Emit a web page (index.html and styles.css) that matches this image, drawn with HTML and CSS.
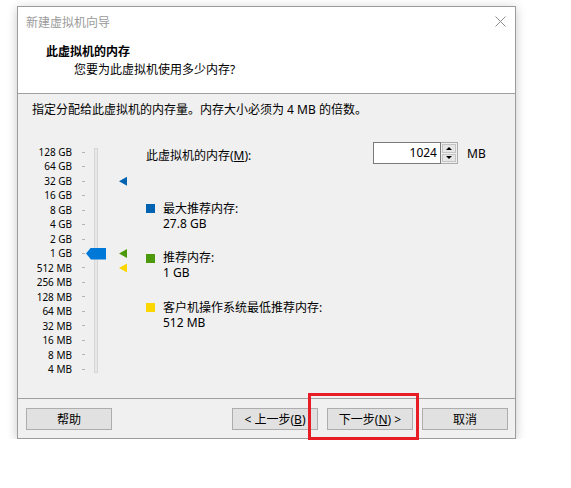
FILE: index.html
```html
<!DOCTYPE html>
<html lang="zh-CN">
<head>
    <meta charset="UTF-8">
    <meta name="viewport" content="width=device-width, initial-scale=1.0">
    <title>新建虚拟机向导</title>
    <link rel="stylesheet" href="styles.css">
</head>
<body>

<div class="wizard">
    <div class="wizard-header">
        <div class="titlebar">
            <span class="titlebar-text">新建虚拟机向导</span>
            <svg class="close-icon" width="11" height="11" viewBox="0 0 11 11">
                <path d="M0.5 0.5L10.5 10.5M10.5 0.5L0.5 10.5" stroke="#8c8c8c" stroke-width="1" fill="none"/>
            </svg>
        </div>
        <div class="page-title">此虚拟机的内存</div>
        <div class="page-subtitle">您要为此虚拟机使用多少内存?</div>
    </div>

    <div class="wizard-body">
        <p class="intro">指定分配给此虚拟机的内存量。内存大小必须为 4 MB 的倍数。</p>

        <div class="memory-panel">
            <div class="slider">
                <div class="slider-track"></div>
                <div class="slider-thumb"></div>
                <div class="marker marker-max"></div>
                <div class="marker marker-rec"></div>
                <div class="marker marker-min"></div>

                <span class="slider-label">128 GB</span><span class="tick"></span>
                <span class="slider-label">64 GB</span><span class="tick"></span>
                <span class="slider-label">32 GB</span><span class="tick"></span>
                <span class="slider-label">16 GB</span><span class="tick"></span>
                <span class="slider-label">8 GB</span><span class="tick"></span>
                <span class="slider-label">4 GB</span><span class="tick"></span>
                <span class="slider-label">2 GB</span><span class="tick"></span>
                <span class="slider-label">1 GB</span><span class="tick"></span>
                <span class="slider-label">512 MB</span><span class="tick"></span>
                <span class="slider-label">256 MB</span><span class="tick"></span>
                <span class="slider-label">128 MB</span><span class="tick"></span>
                <span class="slider-label">64 MB</span><span class="tick"></span>
                <span class="slider-label">32 MB</span><span class="tick"></span>
                <span class="slider-label">16 MB</span><span class="tick"></span>
                <span class="slider-label">8 MB</span><span class="tick"></span>
                <span class="slider-label">4 MB</span><span class="tick"></span>
            </div>

            <div class="memory-settings">
                <div class="memory-field">
                    <span class="memory-field-label">此虚拟机的内存(<u>M</u>):</span>
                    <div class="spin-input">1024</div>
                    <div class="spin-buttons">
                        <div class="spin-btn"><span class="arrow-up"></span></div>
                        <div class="spin-btn"><span class="arrow-down"></span></div>
                    </div>
                    <span class="unit">MB</span>
                </div>

                <div class="legend">
                    <div class="legend-item">
                        <span class="swatch swatch-max"></span>
                        <div class="legend-text">
                            <div class="legend-line">最大推荐内存:</div>
                            <div class="legend-line">27.8 GB</div>
                        </div>
                    </div>
                    <div class="legend-item">
                        <span class="swatch swatch-rec"></span>
                        <div class="legend-text">
                            <div class="legend-line">推荐内存:</div>
                            <div class="legend-line">1 GB</div>
                        </div>
                    </div>
                    <div class="legend-item">
                        <span class="swatch swatch-min"></span>
                        <div class="legend-text">
                            <div class="legend-line">客户机操作系统最低推荐内存:</div>
                            <div class="legend-line">512 MB</div>
                        </div>
                    </div>
                </div>
            </div>
        </div>
    </div>

    <div class="wizard-footer">
        <button class="btn">帮助</button>
        <button class="btn btn-prev">&lt; 上一步(<u>B</u>)</button>
        <button class="btn">下一步(<u>N</u>) &gt;</button>
        <button class="btn">取消</button>
    </div>
</div>

<div class="highlight"></div>

</body>
</html>
```

FILE: styles.css
```css
* {
    box-sizing: border-box;
}
body {
    margin: 0;
    background: #fff;
    font-family: "Noto Sans", "Noto Sans CJK SC", sans-serif;
    font-size: 12px;
    color: #000;
}
.wizard {
    margin: 6px 0 0 17px;
    width: 499px;
    height: 433px;
    border: 1px solid #9c9c9c;
    box-shadow: 0 2px 10px rgba(0, 0, 0, 0.22);
    background: #f0f0f0;
    display: flex;
    flex-direction: column;
}
.wizard-header {
    background: #fff;
    border-bottom: 1px solid #a0a0a0;
    padding-bottom: 14px;
}
.titlebar {
    height: 30px;
    display: flex;
    align-items: center;
    justify-content: space-between;
    padding: 0 9px 0 8px;
}
.titlebar-text {
    color: #9a9a9a;
}
.close-icon {
    margin-top: -2px;
}
.page-title {
    margin: 6px 0 0 28px;
    line-height: 18px;
    font-weight: bold;
}
.page-subtitle {
    margin-left: 56px;
    line-height: 18px;
}
.wizard-body {
    flex: 1;
    padding: 8px 0 0 14px;
}
.intro {
    margin: 0;
    line-height: 16px;
}
.memory-panel {
    display: flex;
    margin-top: 24px;
}

/* slider */
.slider {
    display: grid;
    grid-template-columns: 40px 10px 3px 9px 4px 21px 8px;
    grid-template-rows: repeat(16, 14.47px);
    padding-top: 3px;
}
.slider-label {
    grid-column: 1;
    text-align: right;
    font-size: 10px;
    line-height: 14.47px;
    white-space: nowrap;
}
.tick {
    grid-column: 3;
    align-self: center;
    height: 1px;
    background: #b4b4b4;
}
.slider-track {
    grid-column: 5;
    grid-row: 1 / -1;
    margin: 3px 0 4px;
    background: #e7e7e7;
    border: 1px solid #d6d6d6;
}
.slider-thumb {
    grid-column: 5;
    grid-row: 8;
    justify-self: start;
    align-self: center;
    margin-left: -8px;
    width: 20px;
    height: 12px;
    background: #0078d7;
    clip-path: polygon(0 50%, 25% 0, 100% 0, 100% 100%, 25% 100%);
    z-index: 1;
}
.marker {
    grid-column: 7;
    align-self: center;
    width: 8px;
    height: 9px;
    clip-path: polygon(0 50%, 100% 0, 100% 100%);
}
.marker-max {
    grid-row: 3;
    background: #0063b1;
}
.marker-rec {
    grid-row: 8;
    background: #4c9a0c;
}
.marker-min {
    grid-row: 9;
    background: #fcd600;
}

/* settings */
.memory-settings {
    margin-left: 19px;
}
.memory-field {
    display: flex;
    align-items: center;
    height: 22px;
}
.memory-field-label {
    width: 227px;
    margin-top: 4px;
}
.spin-input {
    width: 68px;
    height: 22px;
    line-height: 20px;
    border: 1px solid #7a7a7a;
    background: #fff;
    text-align: right;
    padding-right: 3px;
}
.spin-buttons {
    width: 17px;
    height: 22px;
    border: 1px solid #adadad;
    border-left: none;
    background: #f0f0f0;
    padding: 1px;
    display: flex;
    flex-direction: column;
    gap: 1px;
}
.spin-btn {
    flex: 1;
    border: 1px solid #c4c4c4;
    background: #e6e6e6;
    display: flex;
    align-items: center;
    justify-content: center;
}
.arrow-up {
    border-left: 3px solid transparent;
    border-right: 3px solid transparent;
    border-bottom: 3px solid #000;
}
.arrow-down {
    border-left: 3px solid transparent;
    border-right: 3px solid transparent;
    border-top: 3px solid #000;
}
.unit {
    margin-left: 9px;
}
.legend {
    display: flex;
    flex-direction: column;
    gap: 19.5px;
    margin-top: 36.5px;
}
.legend-item {
    display: flex;
}
.swatch {
    width: 9px;
    height: 9px;
    margin: 3.5px 8px 0 0;
}
.swatch-max {
    background: #0063b1;
}
.swatch-rec {
    background: #4c9a0c;
}
.swatch-min {
    background: #fcd600;
}
.legend-line {
    height: 15px;
    line-height: 15px;
}

/* footer */
.wizard-footer {
    height: 40px;
    border-top: 1px solid #a0a0a0;
    display: flex;
    gap: 9px;
    padding: 9px 7px 0 8px;
}
.btn {
    width: 86px;
    height: 22px;
    padding: 0;
    border: 1px solid #adadad;
    background: #e1e1e1;
    font-family: inherit;
    font-size: 12px;
    color: #000;
}
.btn-prev {
    margin-left: auto;
}

.highlight {
    position: absolute;
    left: 308px;
    top: 393px;
    width: 111px;
    height: 47px;
    border: 3px solid #e81c24;
}
```
